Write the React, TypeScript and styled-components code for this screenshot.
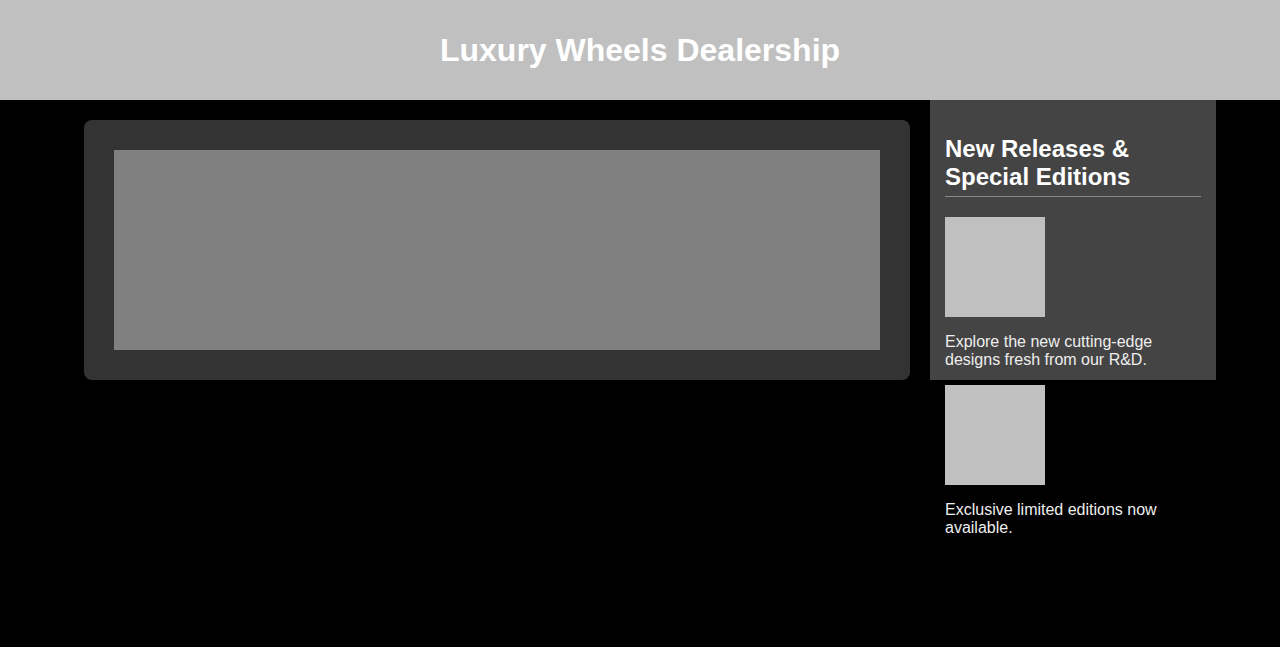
import styled, { createGlobalStyle } from "styled-components";

const GlobalStyle = createGlobalStyle`
  html, body {
    margin: 0;
    padding: 0;
    min-height: 100%;
    background-color: #000;
    font-family: "Liberation Sans", Arial, sans-serif;
    color: #fff;
  }
  #root {
    min-height: 100vh;
  }
`;

const releases = [
  { id: 1, text: "Explore the new cutting-edge designs fresh from our R&D." },
  { id: 2, text: "Exclusive limited editions now available." },
];

export default function App() {
  return (
    <>
      <GlobalStyle />
      <Header>
        <Title>Luxury Wheels Dealership</Title>
      </Header>
      <Main>
        <Showcase>
          <ShowcaseImage />
        </Showcase>
        <Sidebar>
          <SidebarTitle>New Releases &amp; Special Editions</SidebarTitle>
          <ReleaseList>
            {releases.map((item) => (
              <ReleaseItem key={item.id}>
                <ReleaseThumb />
                <ReleaseText>{item.text}</ReleaseText>
              </ReleaseItem>
            ))}
          </ReleaseList>
        </Sidebar>
      </Main>
    </>
  );
}

const Header = styled.header`
  height: 100px;
  background-color: #c0c0c0;
  display: flex;
  align-items: center;
  justify-content: center;
`;

const Title = styled.h1`
  margin: 0;
  font-size: 32px;
  font-weight: bold;
  color: #fff;
`;

const Main = styled.main`
  width: 90%;
  margin: 0 auto;
  display: flex;
  align-items: stretch;
`;

const Showcase = styled.section`
  flex: 1;
  margin: 20px;
  padding: 30px;
  background-color: #333;
  border-radius: 8px;
`;

const ShowcaseImage = styled.div`
  height: 200px;
  background-color: #808080;
`;

const Sidebar = styled.aside`
  width: 286px;
  flex-shrink: 0;
  box-sizing: border-box;
  padding: 15px;
  background-color: #444;
  height: 280px;
  overflow: visible;
`;

const SidebarTitle = styled.h2`
  margin: 20px 0 0;
  padding-bottom: 5px;
  border-bottom: 1px solid #888;
  font-size: 24px;
  font-weight: bold;
`;

const ReleaseList = styled.div`
  margin-top: 20px;
`;

const ReleaseItem = styled.div`
  display: block;
`;

const ReleaseThumb = styled.div`
  width: 100px;
  height: 100px;
  background-color: #c0c0c0;
`;

const ReleaseText = styled.p`
  margin: 16px 0;
  font-size: 16px;
  color: #eee;
`;
